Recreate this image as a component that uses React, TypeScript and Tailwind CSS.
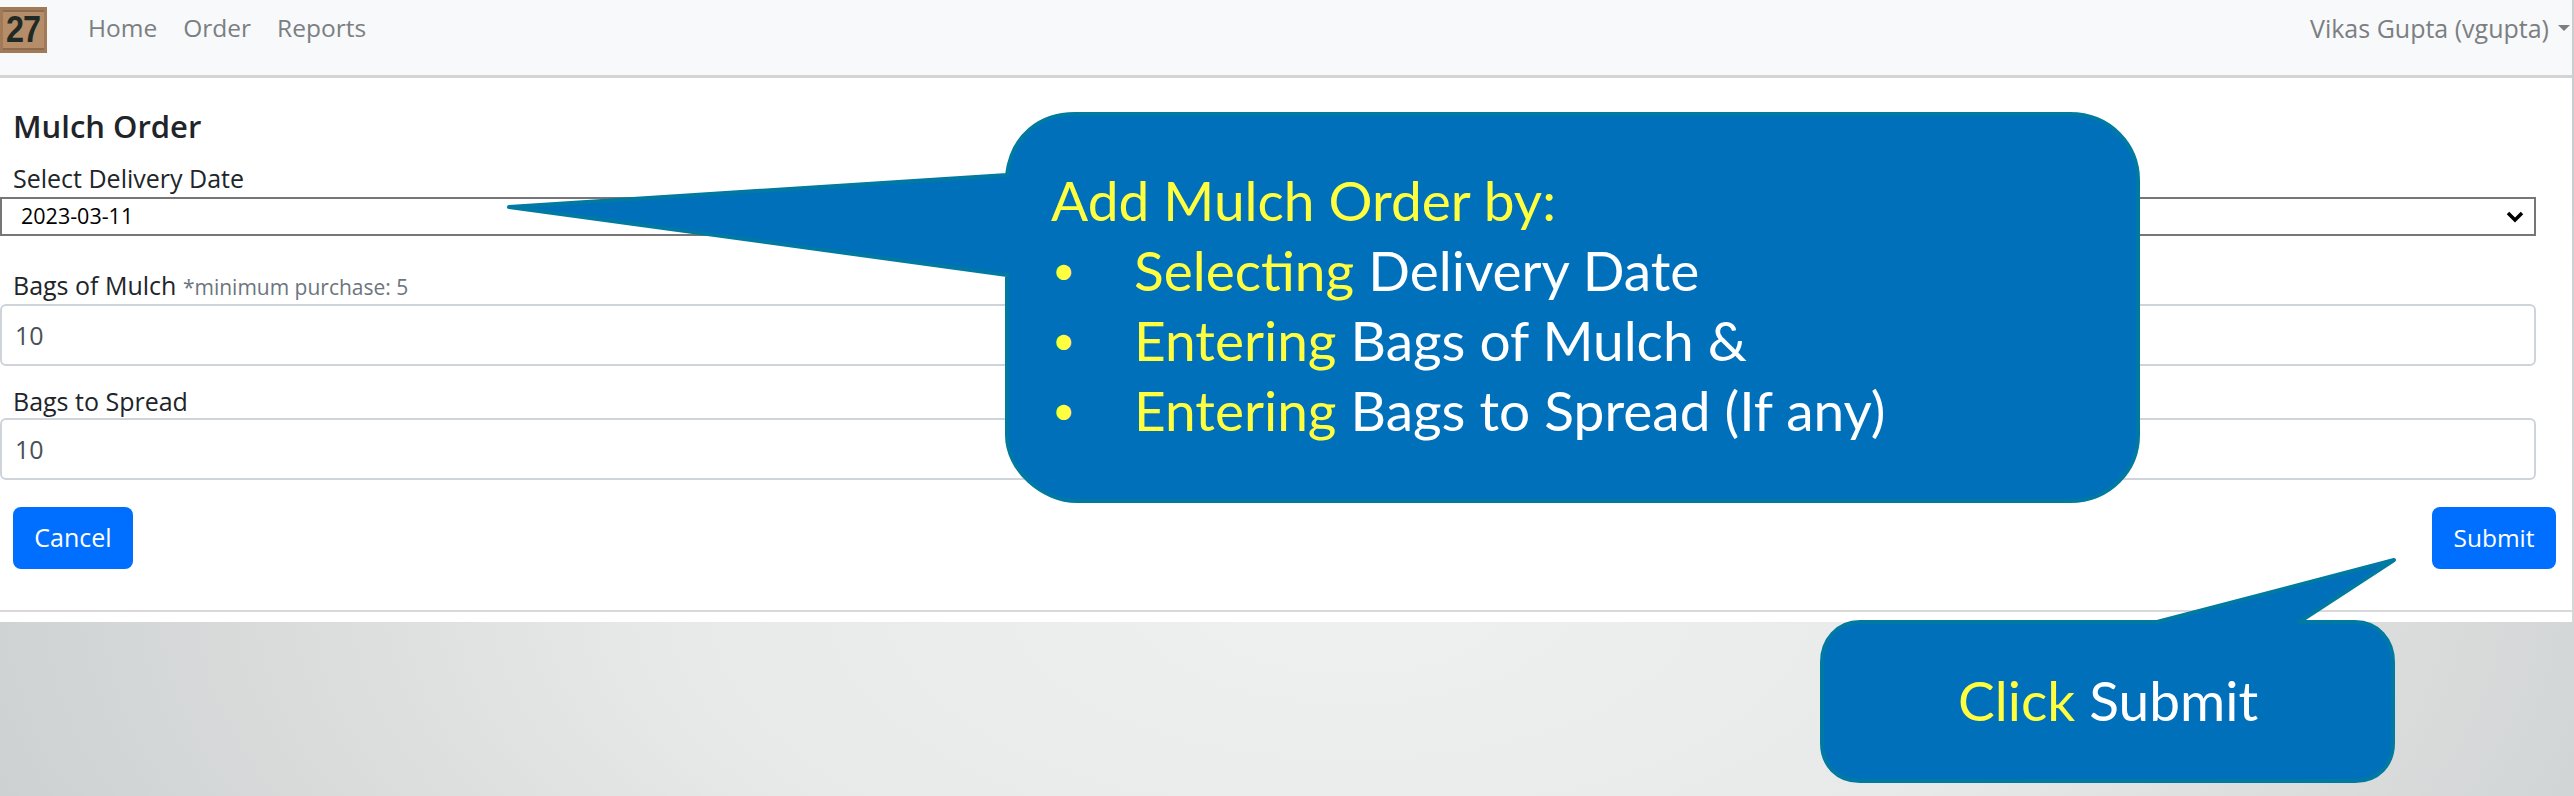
function Logo() {
  return (
    <div className="w-[47px] h-[46px] bg-[#b58d68] border-[3px] border-[#a37a58] flex items-center justify-center overflow-hidden">
      <div className="w-full h-full border-y-2 border-[#8c6b4e] flex items-center justify-center">
        <span className="font-['Liberation_Sans',sans-serif] font-bold text-[36px] leading-none text-[#1f2a26] tracking-[-1px] scale-x-90">27</span>
      </div>
    </div>
  );
}

function Callout({ className, width, height, path, children }: { className: string; width: number; height: number; path: string; children: React.ReactNode }) {
  return (
    <div className={className}>
      <svg width={width} height={height} viewBox={`0 0 ${width} ${height}`} className="absolute inset-0">
        <path d={path} fill="#0070BA" stroke="#0079A3" strokeWidth={4} strokeLinejoin="round" />
      </svg>
      {children}
    </div>
  );
}

export default function App() {
  return (
    <div className="relative w-[2574px] h-[796px] overflow-hidden bg-[radial-gradient(ellipse_1500px_700px_at_1350px_600px,#eff0f0_0%,#e8e9e9_45%,#d0d3d3_90%,#cbcece_100%)] font-['Open_Sans',sans-serif]">
      <div className="w-[2572px] h-[622px] bg-white">
        <nav className="h-[78px] bg-[#f8f9fa] border-b-[3px] border-[#d4d4d4] flex items-start">
          <div className="mt-[7px]"><Logo /></div>
          <div className="ml-[41px] mt-[10px] flex gap-[26px] text-[24.5px] leading-[36px] text-[#7b7f83]">
            <span>Home</span>
            <span>Order</span>
            <span>Reports</span>
          </div>
          <div className="ml-auto mt-[10px] flex items-center text-[25px] leading-[36px] text-[#7b7f83] mr-[2px]">
            <span>Vikas Gupta (vgupta)</span>
            <span className="ml-[9px] w-0 h-0 border-x-[6px] border-x-transparent border-t-[6px] border-t-[#7b7f83]" />
          </div>
        </nav>

        <main className="pl-[13px] pr-[16px]">
          <h1 className="mt-[30px] text-[31px] leading-[36px] font-semibold text-[#212529]">Mulch Order</h1>
          <div className="-ml-[13px] pr-[20px]">
            <label className="block ml-[13px] mt-[18px] mb-[3px] text-[25px] leading-[32px] text-[#212529]">Select Delivery Date</label>
            <div className="h-[39px] border-2 border-[#767676] flex items-center justify-between pl-[19px] pr-[10px] text-[21.5px] text-black">
              <span>2023-03-11</span>
              <svg width="18" height="12" viewBox="0 0 18 12" fill="none" stroke="#000" strokeWidth="3.5">
                <path d="M2 2l7 7 7-7" />
              </svg>
            </div>
            <label className="block ml-[13px] mt-[32px] text-[25px] leading-[34px] text-[#212529]">
              Bags of Mulch <span className="text-[21px] text-[#6c757d]">*minimum purchase: 5</span>
            </label>
            <input readOnly value="10" className="block w-full h-[62px] border-2 border-[#ced4da] rounded-[6px] pl-[13px] text-[25px] text-[#495057] outline-none" />
            <label className="block ml-[13px] mt-[18px] text-[25px] leading-[34px] text-[#212529]">Bags to Spread</label>
            <input readOnly value="10" className="block w-full h-[62px] border-2 border-[#ced4da] rounded-[6px] pl-[13px] text-[25px] text-[#495057] outline-none" />
          </div>
          <div className="mt-[27px] flex justify-between">
            <button className="w-[120px] h-[62px] bg-[#006fff] rounded-[8px] text-[25px] text-white">Cancel</button>
            <button className="w-[124px] h-[62px] bg-[#006fff] rounded-[8px] text-[24.5px] text-white">Submit</button>
          </div>
        </main>
        <hr className="mt-[41px] border-t-[2px] border-[#d9d9d9]" />
      </div>

      <Callout
        className="absolute left-[500px] top-[105px] w-[1650px] h-[405px]"
        width={1650}
        height={405}
        path="M9 102 L507 70 C512 30 540 9 575 9 L1570 9 C1610 9 1638 40 1638 75 L1638 330 C1638 365 1610 396 1570 396 L577 396 C542 396 507 365 507 330 L507 170 Z"
      >
        <div className="absolute left-[551px] top-[60px] text-[55px] leading-[70px] text-white font-['Lato',sans-serif] tracking-[0px]">
          <div className="text-[#ffff40]">Add Mulch Order by<span>:</span></div>
          {[
            ['Selecting', 'Delivery Date'],
            ['Entering', 'Bags of Mulch &'],
            ['Entering', 'Bags to Spread (If any)'],
          ].map(([a, b], i) => (
            <div key={i} className="flex">
              <span className="w-[83px] text-[#ffff40] text-[40px] pl-[1px]">•</span>
              <span><span className="text-[#ffff40]">{a}</span> {b}</span>
            </div>
          ))}
        </div>
      </Callout>

      <Callout
        className="absolute left-[1810px] top-[550px] w-[600px] h-[240px]"
        width={600}
        height={240}
        path="M584 10 L489 72 L545 72 C568 72 583 90 583 112 L583 193 C583 215 568 231 545 231 L50 231 C27 231 12 215 12 193 L12 112 C12 90 27 72 50 72 L347 72 Z"
      >
        <div className="absolute left-[148px] top-[115px] text-[55px] leading-[70px] text-white font-['Lato',sans-serif] whitespace-nowrap">
          <span className="text-[#ffff40]">Click</span> Submit
        </div>
      </Callout>
    </div>
  );
}
